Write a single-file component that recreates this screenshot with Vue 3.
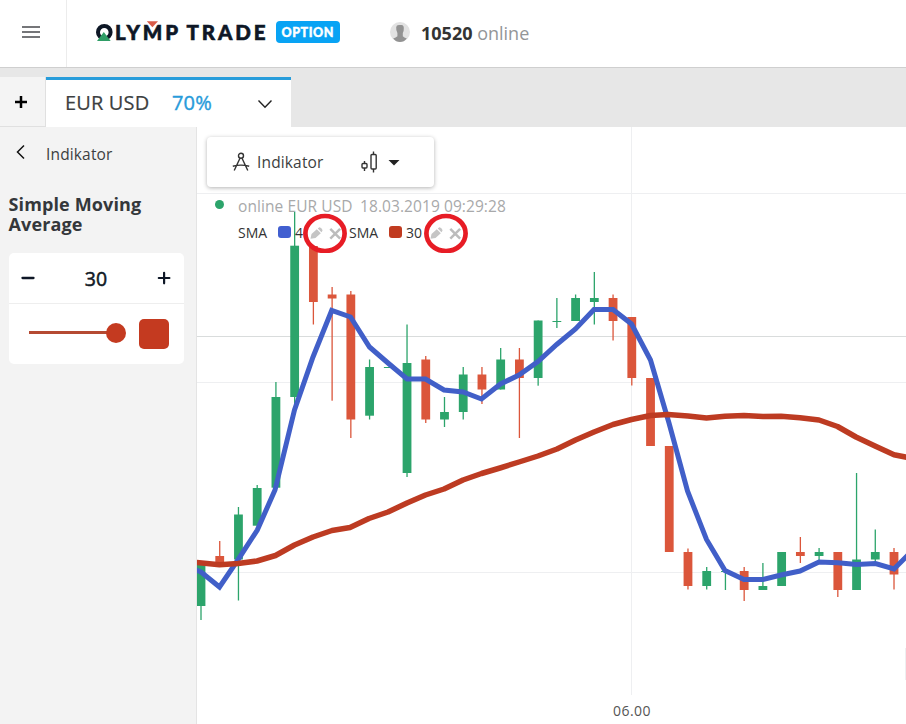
<script setup>
const STEP = 18.73
const ORIGIN = 201

// [high, open/close top, open/close bottom, low, rising]
const candles = [
  [562, 562, 606, 620, 1], [541, 556, 563, 563, 0], [507, 514.5, 559.5, 600.5, 1],
  [485, 488, 525.7, 525.7, 1], [382, 397, 487.7, 487.7, 1], [212, 245.7, 397, 405, 1],
  [246, 246, 302, 324.5, 0], [287, 294.5, 298.5, 400.7, 0], [291, 294.5, 419.5, 438, 0],
  [359.5, 367, 415.7, 419.5, 1], [367, 367, 368, 368, 1], [324.5, 363, 473, 477, 1],
  [356, 359.5, 419.5, 423, 0], [397, 412, 419.5, 427, 1], [367, 374.5, 412, 419.5, 1],
  [367, 374.5, 389.5, 404, 0], [348, 359.5, 389.5, 389.5, 1], [348, 359.5, 378, 438, 0],
  [320.5, 320.5, 378, 385.7, 1], [298, 321, 322, 328, 1], [294.5, 298, 321, 321, 1],
  [272, 298, 302, 324.5, 1], [294.5, 298, 321, 340.5, 0], [317, 317, 378, 385.5, 0],
  [378, 378, 446, 446, 0], [446, 446, 552, 552, 0], [548.5, 552, 586, 589.5, 0],
  [567, 571, 586, 589.5, 1], [571, 571, 572, 590, 1], [567, 571, 590, 601, 0],
  [563, 586, 590, 590, 1], [552, 552, 586, 586, 1], [537, 552, 556, 563, 0],
  [548, 552, 556, 563, 1], [552, 552, 590, 597, 0], [473, 559.5, 590, 590, 1],
  [529.5, 552, 559.5, 562, 1], [548, 552, 574.5, 589.5, 0],
].map(([high, top, bottom, low, up], i) => ({
  x: ORIGIN + i * STEP, high, top, bottom, low, color: up ? '#2ca46b' : '#db563b',
}))

const fast = '196,570 201,572 219.5,587 238.5,559 257.3,530 275,490 294.5,410 313,357 331.7,310.5 350.5,317 369.5,347 388,363 407,379 425.5,379 444,390 463,392 481.5,399 500.5,384 519,375 538,361.5 556.7,344.5 575.5,329 594,309.5 613,309.5 631.5,324 650.5,360 669,423 687.5,491 706.5,539.5 725,570.5 744,579.5 763,579.5 781,575 800,571 819,562 838,562.7 856.7,564.5 875.5,563.5 894,569 908,555'
const slow = '196,562.5 219.5,564.8 238,563.5 257,561 275.5,555.5 294.5,545 313,537 332,530.5 350,527.5 369,518.5 388,512 407,503 425.5,495 444,489 463,480 481.5,473.5 500,468 519,462 538,456 557,449 575.5,440 594,432 613,424.5 631.5,419.5 650.5,415.5 668,414.5 688,416 706.5,418 725,416.3 744,415.5 763,416.5 781,416.2 800,417.8 819,420 837.5,426.5 856,437 875,446 894,454.7 908,457.5'

const indicators = [
  { period: 4, color: '#415fd0', cls: 'first', shift: 0 },
  { period: 30, color: '#c13b20', cls: 'second', shift: -1 },
]
</script>

<template>
  <div class="app">
    <header class="header">
      <button class="menu"><svg width="20" height="14" viewBox="0 0 20 14"><path d="M1 2h18M1 7h18M1 12h18" stroke="#48494d" stroke-width="1.5" /></svg></button>
      <svg class="logo" width="172" height="30" viewBox="0 0 172 30">
        <g class="brand">
          <circle cx="9.3" cy="15.2" r="6.3" fill="none" stroke="#0e1726" stroke-width="4" />
          <text x="20" y="23.200" textLength="63">LYMP</text>
          <text x="91.500" y="23.200" textLength="79">TRADE</text>
        </g>
        <path d="M2 24 8.800 15 15.700 24z" fill="#2f9d66" />
        <path d="M50 3h15l-7.500 9z" fill="#fff" />
        <path d="M51.800 4.200h11.200l-5.600 6z" fill="#d95b47" />
      </svg>
      <svg class="option" width="64" height="22" viewBox="0 0 64 22">
        <rect width="64" height="22" rx="4" fill="#08a3f4" />
        <text x="5.500" y="15.500" textLength="52">OPTION</text>
      </svg>
      <svg class="avatar" width="20" height="20" viewBox="0 0 20 20">
        <circle cx="10" cy="10" r="10" fill="#e2e2e2" />
        <path d="M6.2 5.2Q6.3 3 9 3h2.500Q14 3.300 13.800 6.500 14 8.500 12.800 11v3.200q1.200 1.200 4 2.300Q14 20 10 20t-6.800-3.500q2.800-1.100 4.200-2.300V11Q5.900 8.500 6.200 5.200z" fill="#929292" />
      </svg>
      <div class="online"><b>10520</b> online</div>
    </header>

    <nav class="tabs">
      <button class="add"><svg width="12" height="12" viewBox="0 0 12 12"><path d="M0 6h12M6 0v12" stroke="#000" stroke-width="2.5" /></svg></button>
      <div class="tab">
        <span class="pair">EUR USD</span>
        <span class="rate">70%</span>
        <svg width="16" height="10" viewBox="0 0 16 10"><path d="M1.500 1.500 8 8.200l6.500-6.700" fill="none" stroke="#222" stroke-width="1.4" /></svg>
      </div>
    </nav>

    <div class="body">
      <aside class="side">
        <div class="back">
          <svg width="10" height="16" viewBox="0 0 10 16"><path d="M8 1.500 1.500 8 8 14.500" fill="none" stroke="#111" stroke-width="1.5" /></svg>
          <span>Indikator</span>
        </div>
        <h2>Simple Moving<br />Average</h2>
        <div class="card">
          <div class="stepper">
            <svg width="14" height="14" viewBox="0 0 14 14"><path d="M1.500 7h11" stroke="#0e1726" stroke-width="2.3" stroke-linecap="round" /></svg>
            <span>30</span>
            <svg width="14" height="14" viewBox="0 0 14 14"><path d="M1.800 7h10.600M7.100 1.800v10.500" stroke="#0e1726" stroke-width="2.2" stroke-linecap="round" /></svg>
          </div>
          <div class="style-row">
            <div class="slider"><i></i></div>
            <div class="swatch"></div>
          </div>
        </div>
      </aside>

      <main class="chart">
        <svg class="plot" width="709" height="597" viewBox="197 127 709 597">
          <g stroke="#eeeff1">
            <path d="M197 193.500H906M197 382.500H906M197 572.500H906M631.500 127V695" />
            <path d="M905.500 648v32" />
          </g>
          <path d="M197 336.500H906" stroke="#d9dcdc" />
          <g v-for="c in candles" :key="c.x" :fill="c.color">
            <rect :x="c.x - 0.65" :y="c.high" width="1.3" :height="c.low - c.high" />
            <rect :x="c.x - 4.4" :y="c.top" width="8.8" :height="c.bottom - c.top" />
          </g>
          <polyline :points="fast" fill="none" stroke="#415fc8" stroke-width="5" stroke-linejoin="miter" />
          <polyline :points="slow" fill="none" stroke="#bd3b22" stroke-width="5.5" stroke-linejoin="round" />
          <text class="time" x="613" y="716" textLength="37.500">06.00</text>
        </svg>

        <div class="overlay">
          <div class="toolbar">
            <svg width="18" height="20" viewBox="0 0 18 20" fill="none" stroke="#333" stroke-width="1.4">
              <circle cx="9" cy="3.800" r="2.500" /><path d="M8 6.200 2.200 18.500M10 6.200l5.800 12.300M.8 14.200Q9 12 17.200 14.200" />
            </svg>
            <span>Indikator</span>
            <svg class="candle-icon" width="17" height="22" viewBox="0 0 17 22" fill="none" stroke="#333" stroke-width="1.4">
              <rect x="1" y="12.500" width="5" height="4.500" rx="1" /><path d="M3.500 10v2.500M3.500 17v3M12.500 .5v3M12.500 18v3.500" /><rect x="10" y="3.500" width="5.200" height="14.500" rx="1" />
            </svg>
            <svg width="12" height="7" viewBox="0 0 12 7"><path d="M.5 1h11L6 6.500z" fill="#222" /></svg>
          </div>
          <div class="status"><i></i><span class="name">online EUR USD</span><span class="date">18.03.2019 09:29:28</span></div>
          <div class="legend">
            <div v-for="s in indicators" :key="s.period" class="item" :class="s.cls">
              <span class="label">SMA</span>
              <i :style="{ background: s.color }"></i>
              <span class="period">{{ s.period }}</span>
              <svg class="actions" width="44" height="40" viewBox="0 0 44 40">
                <ellipse cx="22" cy="20.500" rx="19.600" ry="17.500" fill="none" stroke="#e71c25" stroke-width="4.700" />
                <g :transform="`translate(${s.shift} 0.5)`">
                  <path d="M7.500 25.300l1-4.800 5.300-4.700 4 4-5.300 4.700zM14.800 15l1.500-1.300q3 .5 3.200 3.500l-1.100 1.500z" fill="#c5c5c5" />
                  <path d="M27.300 15.300l9.800 9.800m0-9.800l-9.800 9.800" stroke="#bcbcbc" stroke-width="2.500" />
                </g>
              </svg>
            </div>
          </div>
        </div>
      </main>
    </div>
  </div>
</template>

<style>
body { margin: 0; }
</style>

<style scoped>
.app { width: 906px; height: 724px; overflow: hidden; display: flex; flex-direction: column; background: #fff; font-family: "Open Sans", sans-serif; color: #3d3f41; }
.app * { box-sizing: border-box; }
svg { display: block; flex: none; }
button { border: 0; padding: 0; display: flex; align-items: center; justify-content: center; background: none; }
.header { height: 68px; flex: none; display: flex; align-items: center; border-bottom: 1px solid #cfcfcf; padding-bottom: 3px; }
.menu { width: 67px; height: 67px; border-right: 1px solid #ececec; padding-right: 5px; margin-bottom: -3px; padding-bottom: 3px; }
.logo { margin: 0 9px 0 28px; }
.brand text { font: 900 20.5px Lato, sans-serif; fill: #0e1726; stroke: #0e1726; stroke-width: .6; }
.option text { font: 900 12.5px Lato, sans-serif; fill: #fff; stroke: #fff; stroke-width: .4; }
.avatar { margin-left: 50px; }
.online { margin-left: 11px; padding-top: 1px; font-size: 18px; color: #939698; white-space: nowrap; }
.online b { color: #333; font-weight: 700; }
.tabs { height: 59px; flex: none; display: flex; align-items: flex-end; background: #e7e7e7; }
.add { width: 46px; height: 50px; background: #f4f4f4; border-right: 1px solid #e0e0e0; border-bottom: 1px solid #e0e0e0; padding-right: 4px; }
.tab { width: 245px; height: 50px; background: #fff; border-top: 3px solid #289ddb; display: flex; align-items: center; padding: 0 18px 3px 19px; font-size: 20px; white-space: nowrap; }
.pair { width: 107px; letter-spacing: .15px; -webkit-text-stroke: .2px #3d3f41; }
.rate { color: #289bda; flex: 1; letter-spacing: .15px; -webkit-text-stroke: .4px #289bda; }
.tab svg { margin-top: 4px; }
.body { flex: 1; display: flex; }
.side { width: 197px; background: #f3f3f3; border-right: 1px solid #e4e4e4; }
.back { height: 54px; display: flex; align-items: center; padding-left: 16px; gap: 20px; font-size: 15.5px; letter-spacing: .15px; }
.back svg { margin-bottom: 4px; }
h2 { margin: 13px 0 0 8.5px; font-size: 18px; letter-spacing: .13px; line-height: 20px; font-weight: 700; color: #34373a; }
.card { width: 175px; height: 111px; margin: 19px 0 0 9px; background: #fff; border-radius: 5px; }
.stepper { height: 51px; padding: 0 13px; display: flex; align-items: center; justify-content: space-between; border-bottom: 1px solid #eee; font-size: 19.5px; color: #111925; -webkit-text-stroke: .5px #111925; }
.stepper svg:first-child { margin-left: -1px; }
.stepper svg { margin-bottom: 1px; }
.style-row { height: 60px; display: flex; align-items: center; padding-left: 20px; gap: 13px; }
.slider { width: 97px; height: 20px; margin-bottom: 2px; display: flex; align-items: center; justify-content: flex-end; background: linear-gradient(#b54a32, #b54a32) 0 8px / 90px 3px no-repeat; }
.slider i { width: 20px; height: 20px; border-radius: 50%; background: #c43a20; }
.swatch { width: 30px; height: 30px; border-radius: 5px; background: #c43a20; }
.chart { position: relative; width: 709px; }
.time { font-size: 14px; fill: #555; }
.overlay { position: absolute; inset: 0; padding: 10px; }
.toolbar { width: 227px; height: 50px; display: flex; align-items: center; padding-left: 25px; background: #fff; border-radius: 4px; box-shadow: 0 1px 4px rgba(0,0,0,.3); font-size: 15.5px; letter-spacing: .15px; }
.toolbar span { width: 104px; margin-left: 7px; }
.candle-icon { margin-right: 10px; }
.status { height: 20px; margin-top: 9px; display: flex; align-items: center; font-size: 15.5px; letter-spacing: .08px; color: #a8a9aa; white-space: nowrap; }
.status i { width: 9px; height: 9px; border-radius: 50%; background: #2ca46b; margin: 0 14px 4px 8px; }
.status .name { width: 122px; }
.legend { display: flex; margin-top: -3px; padding-left: 31px; height: 40px; font-size: 14px; color: #333; }
.item { display: flex; align-items: center; }
.label, .period { padding-bottom: 1px; }
.item i { width: 13px; height: 12px; border-radius: 3px; margin-left: 10px; margin-bottom: 2px; }
.label { width: 30px; }
.period { width: 8px; margin-left: 4px; }
.first { width: 111px; }
.first .actions { margin-left: -.5px; }
.second i { margin-left: 10px; }
.second .period { width: 18px; }
.second .actions { margin-left: -.5px; }
</style>
